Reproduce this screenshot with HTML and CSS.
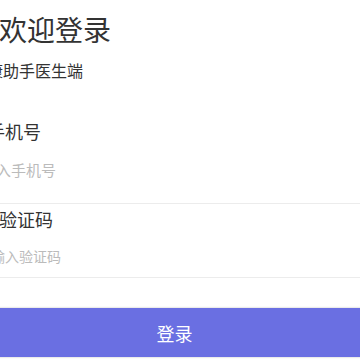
FILE: index.html
```html
<!DOCTYPE html>
<html lang="zh-CN">
  <head>
    <meta charset="UTF-8" />
    <title>欢迎登录</title>
    <link rel="stylesheet" href="styles.css">
  </head>
  <body>
    <main class="login">
      <header class="login__head">
        <h1 class="login__title">欢迎登录</h1>
        <p class="login__sub">健康助手医生端</p>
      </header>
      <form class="login__form">
        <label class="field field--phone">
          <span class="field__label">手机号</span>
          <input class="field__input" type="tel" placeholder="输入手机号">
        </label>
        <label class="field field--code">
          <span class="field__label">验证码</span>
          <input class="field__input" type="text" placeholder="请输入验证码">
        </label>
        <button type="button" class="login__btn">登录</button>
      </form>
    </main>
  </body>
</html>
```

FILE: styles.css
```css
:root {
  --color-text: #333;
  --color-holder: #bbb;
  --color-line: #ececec;
  --color-main: #6a6fe2;
  font-family: 'Noto Sans CJK SC', 'Noto Sans', sans-serif;
  color: var(--color-text);
}
* {
  margin: 0;
  padding: 0;
  box-sizing: border-box;
}
body {
  width: 360px;
  height: 360px;
  overflow: hidden;
  background-color: #fff;
}
/* 页面整体 */
.login {
  width: 375px;
  margin-left: -13px;
}
.login__head {
  padding-top: 9px;
}
.login__title {
  padding-left: 12px;
  font-size: 28px;
  font-weight: 400;
  line-height: 40px;
}
.login__sub {
  margin: 9px 0 0 -16px;
  font-size: 16px;
  line-height: 24px;
}
/* 输入框 */
.login__form {
  margin-top: 36px;
}
.field {
  display: flex;
  flex-direction: column;
  border-bottom: 1px solid var(--color-line);
}
.field__label {
  font-size: 18px;
  line-height: 26px;
}
.field__input {
  height: 40px;
  border: none;
  outline: none;
  font-family: inherit;
  font-size: 15px;
  color: var(--color-text);
  background: transparent;
}
.field__input::placeholder {
  color: var(--color-holder);
}
.field--phone {
  padding-bottom: 14px;
}
.field--phone .field__input {
  margin: 5px 0 0 -6px;
}
.field--code {
  padding: 2px 0 3px 12px;
}
.field--code .field__input {
  height: 36px;
  margin: 6px 0 0 -22px;
  font-size: 14px;
}
/* 登录按钮 */
.login__btn {
  display: block;
  width: 100%;
  height: 49px;
  margin-top: 30px;
  border: none;
  color: #fff;
  font-family: inherit;
  font-size: 18px;
  background-color: var(--color-main);
  box-shadow: 0 0 2px rgba(0, 0, 0, 0.25);
}
```
